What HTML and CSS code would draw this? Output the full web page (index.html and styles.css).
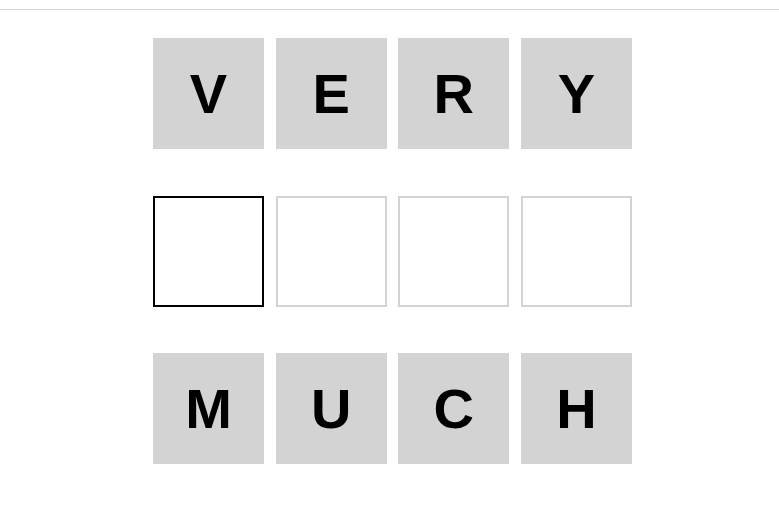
FILE: index.html
```html
<!DOCTYPE html>
<html lang="en">
<head>
    <meta charset="UTF-8">
    <meta name="viewport" content="width=device-width, initial-scale=1.0">
    <title>Word Ladder</title>
    <link rel="stylesheet" href="styles.css">
</head>
<body>
    <header class="topbar"></header>

    <main class="board">
        <div class="row">
            <div class="tile filled">V</div>
            <div class="tile filled">E</div>
            <div class="tile filled">R</div>
            <div class="tile filled">Y</div>
        </div>
        <div class="row">
            <div class="tile empty active"></div>
            <div class="tile empty"></div>
            <div class="tile empty"></div>
            <div class="tile empty"></div>
        </div>
        <div class="row">
            <div class="tile filled">M</div>
            <div class="tile filled">U</div>
            <div class="tile filled">C</div>
            <div class="tile filled">H</div>
        </div>
    </main>
</body>
</html>
```

FILE: styles.css
```css
body {
    margin: 0;
    background: #fff;
    font-family: "Liberation Sans", Arial, sans-serif;
}
.topbar {
    height: 9px;
    border-bottom: 1px solid #d9d9d9;
}
.board {
    display: flex;
    flex-direction: column;
    align-items: center;
    gap: 46.5px;
    padding: 28px 0 0 6px;
}
.row {
    display: grid;
    grid-template-columns: repeat(4, 111px);
    gap: 11.7px;
}
.tile {
    box-sizing: border-box;
    height: 111px;
    display: flex;
    align-items: center;
    justify-content: center;
    font-size: 56px;
    font-weight: bold;
    color: #000;
}
.filled {
    background: #d3d3d3;
}
.empty {
    border: 2px solid #d3d3d3;
}
.empty.active {
    border-color: #000;
}
```
